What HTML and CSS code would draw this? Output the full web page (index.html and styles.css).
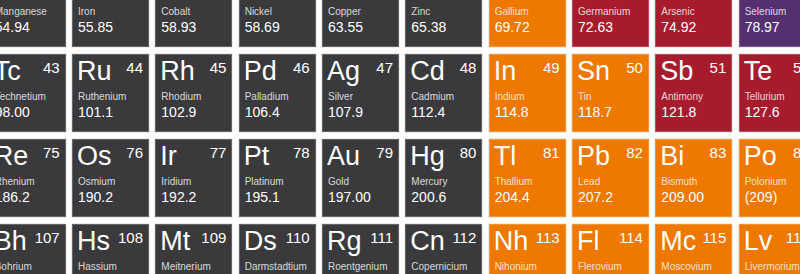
FILE: index.html
```html
<!DOCTYPE html>
<html lang="en">
<head>
<meta charset="utf-8">
<title>Periodic Table</title>
<link rel="stylesheet" href="styles.css">
</head>
<body>
<main class="table">
  <div class="el transition"><div class="top"><span class="sym">Mn</span><span class="num">25</span></div><div class="name">Manganese</div><div class="mass">54.94</div></div>
  <div class="el transition"><div class="top"><span class="sym">Fe</span><span class="num">26</span></div><div class="name">Iron</div><div class="mass">55.85</div></div>
  <div class="el transition"><div class="top"><span class="sym">Co</span><span class="num">27</span></div><div class="name">Cobalt</div><div class="mass">58.93</div></div>
  <div class="el transition"><div class="top"><span class="sym">Ni</span><span class="num">28</span></div><div class="name">Nickel</div><div class="mass">58.69</div></div>
  <div class="el transition"><div class="top"><span class="sym">Cu</span><span class="num">29</span></div><div class="name">Copper</div><div class="mass">63.55</div></div>
  <div class="el transition"><div class="top"><span class="sym">Zn</span><span class="num">30</span></div><div class="name">Zinc</div><div class="mass">65.38</div></div>
  <div class="el post"><div class="top"><span class="sym">Ga</span><span class="num">31</span></div><div class="name">Gallium</div><div class="mass">69.72</div></div>
  <div class="el metalloid"><div class="top"><span class="sym">Ge</span><span class="num">32</span></div><div class="name">Germanium</div><div class="mass">72.63</div></div>
  <div class="el metalloid"><div class="top"><span class="sym">As</span><span class="num">33</span></div><div class="name">Arsenic</div><div class="mass">74.92</div></div>
  <div class="el nonmetal"><div class="top"><span class="sym">Se</span><span class="num">34</span></div><div class="name">Selenium</div><div class="mass">78.97</div></div>

  <div class="el transition"><div class="top"><span class="sym">Tc</span><span class="num">43</span></div><div class="name">Technetium</div><div class="mass">98.00</div></div>
  <div class="el transition"><div class="top"><span class="sym">Ru</span><span class="num">44</span></div><div class="name">Ruthenium</div><div class="mass">101.1</div></div>
  <div class="el transition"><div class="top"><span class="sym">Rh</span><span class="num">45</span></div><div class="name">Rhodium</div><div class="mass">102.9</div></div>
  <div class="el transition"><div class="top"><span class="sym">Pd</span><span class="num">46</span></div><div class="name">Palladium</div><div class="mass">106.4</div></div>
  <div class="el transition"><div class="top"><span class="sym">Ag</span><span class="num">47</span></div><div class="name">Silver</div><div class="mass">107.9</div></div>
  <div class="el transition"><div class="top"><span class="sym">Cd</span><span class="num">48</span></div><div class="name">Cadmium</div><div class="mass">112.4</div></div>
  <div class="el post"><div class="top"><span class="sym">In</span><span class="num">49</span></div><div class="name">Indium</div><div class="mass">114.8</div></div>
  <div class="el post"><div class="top"><span class="sym">Sn</span><span class="num">50</span></div><div class="name">Tin</div><div class="mass">118.7</div></div>
  <div class="el metalloid"><div class="top"><span class="sym">Sb</span><span class="num">51</span></div><div class="name">Antimony</div><div class="mass">121.8</div></div>
  <div class="el metalloid"><div class="top"><span class="sym">Te</span><span class="num">52</span></div><div class="name">Tellurium</div><div class="mass">127.6</div></div>

  <div class="el transition"><div class="top"><span class="sym">Re</span><span class="num">75</span></div><div class="name">Rhenium</div><div class="mass">186.2</div></div>
  <div class="el transition"><div class="top"><span class="sym">Os</span><span class="num">76</span></div><div class="name">Osmium</div><div class="mass">190.2</div></div>
  <div class="el transition"><div class="top"><span class="sym">Ir</span><span class="num">77</span></div><div class="name">Iridium</div><div class="mass">192.2</div></div>
  <div class="el transition"><div class="top"><span class="sym">Pt</span><span class="num">78</span></div><div class="name">Platinum</div><div class="mass">195.1</div></div>
  <div class="el transition"><div class="top"><span class="sym">Au</span><span class="num">79</span></div><div class="name">Gold</div><div class="mass">197.00</div></div>
  <div class="el transition"><div class="top"><span class="sym">Hg</span><span class="num">80</span></div><div class="name">Mercury</div><div class="mass">200.6</div></div>
  <div class="el post"><div class="top"><span class="sym">Tl</span><span class="num">81</span></div><div class="name">Thallium</div><div class="mass">204.4</div></div>
  <div class="el post"><div class="top"><span class="sym">Pb</span><span class="num">82</span></div><div class="name">Lead</div><div class="mass">207.2</div></div>
  <div class="el post"><div class="top"><span class="sym">Bi</span><span class="num">83</span></div><div class="name">Bismuth</div><div class="mass">209.00</div></div>
  <div class="el post"><div class="top"><span class="sym">Po</span><span class="num">84</span></div><div class="name">Polonium</div><div class="mass">(209)</div></div>

  <div class="el transition"><div class="top"><span class="sym">Bh</span><span class="num">107</span></div><div class="name">Bohrium</div><div class="mass">(270)</div></div>
  <div class="el transition"><div class="top"><span class="sym">Hs</span><span class="num">108</span></div><div class="name">Hassium</div><div class="mass">(269)</div></div>
  <div class="el transition"><div class="top"><span class="sym">Mt</span><span class="num">109</span></div><div class="name">Meitnerium</div><div class="mass">(278)</div></div>
  <div class="el transition"><div class="top"><span class="sym">Ds</span><span class="num">110</span></div><div class="name">Darmstadtium</div><div class="mass">(281)</div></div>
  <div class="el transition"><div class="top"><span class="sym">Rg</span><span class="num">111</span></div><div class="name">Roentgenium</div><div class="mass">(282)</div></div>
  <div class="el transition"><div class="top"><span class="sym">Cn</span><span class="num">112</span></div><div class="name">Copernicium</div><div class="mass">(285)</div></div>
  <div class="el post"><div class="top"><span class="sym">Nh</span><span class="num">113</span></div><div class="name">Nihonium</div><div class="mass">(286)</div></div>
  <div class="el post"><div class="top"><span class="sym">Fl</span><span class="num">114</span></div><div class="name">Flerovium</div><div class="mass">(289)</div></div>
  <div class="el post"><div class="top"><span class="sym">Mc</span><span class="num">115</span></div><div class="name">Moscovium</div><div class="mass">(290)</div></div>
  <div class="el post"><div class="top"><span class="sym">Lv</span><span class="num">116</span></div><div class="name">Livermorium</div><div class="mass">(293)</div></div>
</main>
</body>
</html>
```

FILE: styles.css
```css
html, body {
  margin: 0;
  padding: 0;
  background: #ffffff;
  overflow: hidden;
  width: 800px;
  height: 274px;
}

body {
  font-family: "Liberation Sans", Arial, Helvetica, sans-serif;
  color: #ffffff;
}

.table {
  display: grid;
  grid-template-columns: repeat(10, 77px);
  grid-auto-rows: 77.5px;
  column-gap: 6.33px;
  row-gap: 7.5px;
  margin: -30.8px 0 0 -11.33px;
}

.el {
  box-sizing: border-box;
  padding: 4px 5px 0 5px;
  display: flex;
  flex-direction: column;
  border: 1px solid rgba(255, 255, 255, 0.22);
  box-shadow: 0 0 0 0.5px rgba(0, 0, 0, 0.15);
}

.transition { background: #3a3a3c; }
.post { background: #ee7800; }
.metalloid { background: #a61c2d; }
.nonmetal { background: #55306f; }

.top {
  display: flex;
  justify-content: space-between;
  align-items: flex-start;
  margin-top: -1px;
}

.sym {
  font-size: 27px;
  line-height: 27px;
  margin-left: -1px;
}

.num {
  font-size: 15px;
  line-height: 15px;
  margin-top: 2px;
}

.name {
  font-size: 10px;
  line-height: 10px;
  margin-top: 7px;
  color: rgba(255, 255, 255, 0.82);
  white-space: nowrap;
}

.mass {
  font-size: 14px;
  line-height: 14px;
  margin-top: 3px;
}
```
